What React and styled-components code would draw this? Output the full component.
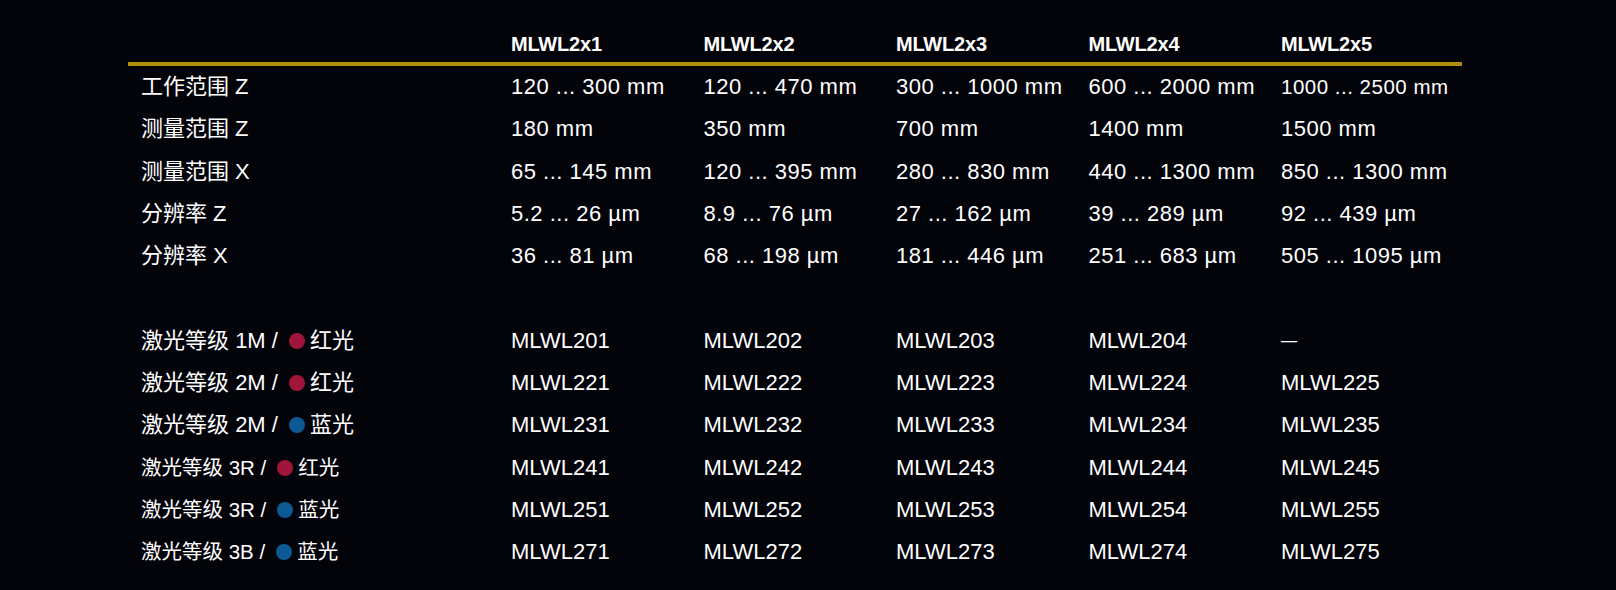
import styled, { createGlobalStyle } from "styled-components";

const GlobalStyle = createGlobalStyle`
  html, body {
    margin: 0;
    padding: 0;
    background: #03030a;
  }
  body {
    font-family: "Liberation Sans", "Noto Sans CJK SC", sans-serif;
    color: #ffffff;
  }
`;

const models = ["MLWL2x1", "MLWL2x2", "MLWL2x3", "MLWL2x4", "MLWL2x5"];

const specs = [
  {
    label: "工作范围 Z",
    values: ["120 ... 300 mm", "120 ... 470 mm", "300 ... 1000 mm", "600 ... 2000 mm", "1000 ... 2500 mm"],
  },
  { label: "测量范围 Z", values: ["180 mm", "350 mm", "700 mm", "1400 mm", "1500 mm"] },
  {
    label: "测量范围 X",
    values: ["65 ... 145 mm", "120 ... 395 mm", "280 ... 830 mm", "440 ... 1300 mm", "850 ... 1300 mm"],
  },
  {
    label: "分辨率 Z",
    values: ["5.2 ... 26 µm", "8.9 ... 76 µm", "27 ... 162 µm", "39 ... 289 µm", "92 ... 439 µm"],
  },
  {
    label: "分辨率 X",
    values: ["36 ... 81 µm", "68 ... 198 µm", "181 ... 446 µm", "251 ... 683 µm", "505 ... 1095 µm"],
  },
];

// 激光等级 rows
const lasers = [
  { cls: "1M", tone: "red", light: "红光", ids: ["MLWL201", "MLWL202", "MLWL203", "MLWL204", null] },
  { cls: "2M", tone: "red", light: "红光", ids: ["MLWL221", "MLWL222", "MLWL223", "MLWL224", "MLWL225"] },
  { cls: "2M", tone: "blue", light: "蓝光", ids: ["MLWL231", "MLWL232", "MLWL233", "MLWL234", "MLWL235"] },
  { cls: "3R", tone: "red", light: "红光", ids: ["MLWL241", "MLWL242", "MLWL243", "MLWL244", "MLWL245"] },
  { cls: "3R", tone: "blue", light: "蓝光", ids: ["MLWL251", "MLWL252", "MLWL253", "MLWL254", "MLWL255"] },
  { cls: "3B", tone: "blue", light: "蓝光", ids: ["MLWL271", "MLWL272", "MLWL273", "MLWL274", "MLWL275"] },
];

const App = () => {
  return (
    <>
      <GlobalStyle />
      <Page>
        <Table>
          <HeadRow>
            <span />
            {models.map((m) => (
              <HeadCell key={m}>{m}</HeadCell>
            ))}
          </HeadRow>
          {specs.map((row) => (
            <Row key={row.label}>
              <Label>{row.label}</Label>
              {row.values.map((v, i) => (
                <Cell key={i} small={v.length > 15}>
                  {v}
                </Cell>
              ))}
            </Row>
          ))}
          <Spacer />
          {lasers.map((row, idx) => (
            <Row key={idx}>
              <Label compact={row.cls.startsWith("3")}>
                激光等级 {row.cls} /<Dot tone={row.tone} />
                {row.light}
              </Label>
              {row.ids.map((v, i) =>
                v ? <Code key={i}>{v}</Code> : <Dash key={i}>—</Dash>
              )}
            </Row>
          ))}
        </Table>
      </Page>
    </>
  );
};
export default App;

const Page = styled.div`
  width: 1616px;
  height: 590px;
  overflow: hidden;
  padding-left: 128px;
  box-sizing: border-box;
`;

const Table = styled.div`
  width: 1334px;
`;

const cols = `383px repeat(4, 192.5px) 1fr`;

const HeadRow = styled.div`
  display: grid;
  grid-template-columns: ${cols};
  padding: 32px 0 6px;
  line-height: 24px;
  border-bottom: 4px solid #b08d0f;
`;

const HeadCell = styled.span`
  font-size: 20px;
  font-weight: 700;
  letter-spacing: -0.2px;
`;

const Row = styled.div`
  display: grid;
  grid-template-columns: ${cols};
  box-sizing: border-box;
  height: 42.3px;
  padding-top: 2px;
  line-height: 38px;
  font-size: 22px;
  white-space: nowrap;
`;

const Spacer = styled.div`
  height: 42.3px;
`;

const Label = styled.span`
  padding-left: 13px;
  font-size: ${(p) => (p.compact ? "20.5px" : "22px")};
`;

const Cell = styled.span`
  font-size: ${(p) => (p.small ? "20.5px" : "22px")};
  letter-spacing: 0.5px;
`;

const Code = styled.span`
  font-size: 22px;
`;

const Dash = styled.span`
  font-size: 16px;
  vertical-align: 1.5px;
`;

const Dot = styled.span`
  display: inline-block;
  width: 16px;
  height: 16px;
  border-radius: 50%;
  margin: 0 5px 0 11px;
  vertical-align: -1px;
  background: ${(p) => (p.tone === "blue" ? "#0b5a96" : "#a0163a")};
`;
